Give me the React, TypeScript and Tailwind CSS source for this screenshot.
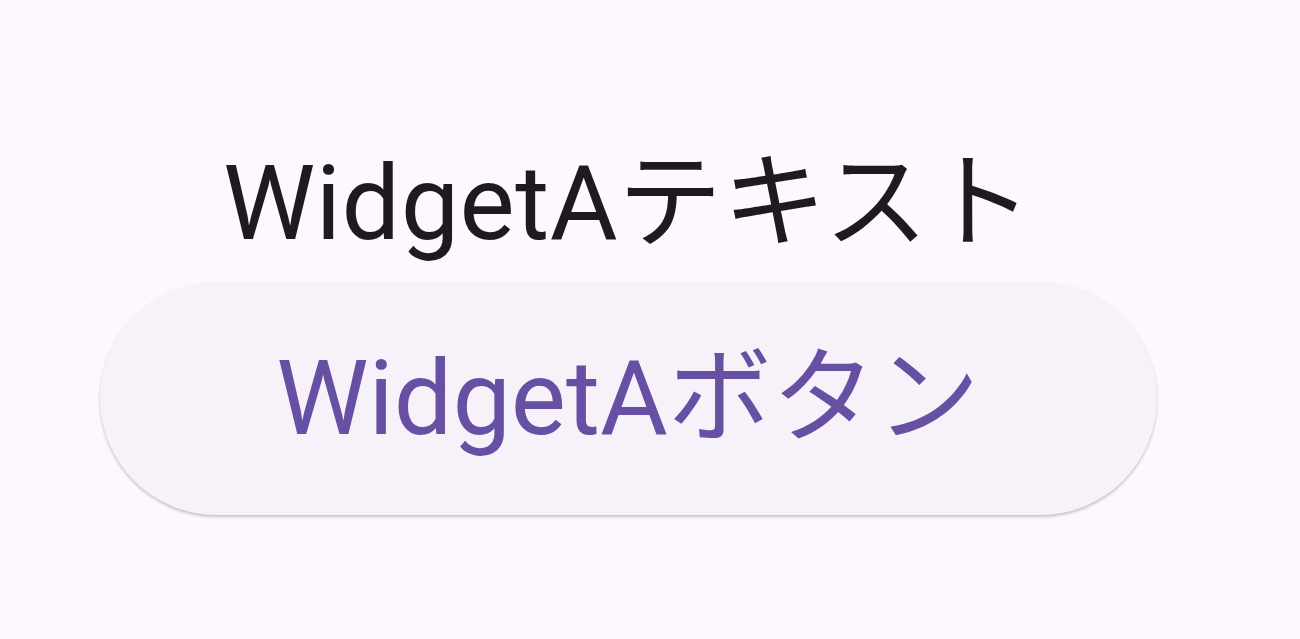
export default function App() {
  return (
    <div className="h-screen w-full bg-[#fef7ff] flex flex-col items-center pt-[140px] pr-[44px] font-['Roboto','Noto_Sans_CJK_JP',sans-serif]">
      <div className="text-[104px] leading-[127px] text-[#1d1b20] tracking-[0.5px] whitespace-nowrap">
        WidgetAテキスト
      </div>
      <button className="mt-[15px] h-[233px] w-[1057px] rounded-full bg-[#f7f2fa] shadow-[0_2px_3px_rgba(0,0,0,0.22)] flex items-center justify-center text-[104px] leading-[127px] text-[#6750a4] whitespace-nowrap">
        WidgetAボタン
      </button>
    </div>
  );
}
